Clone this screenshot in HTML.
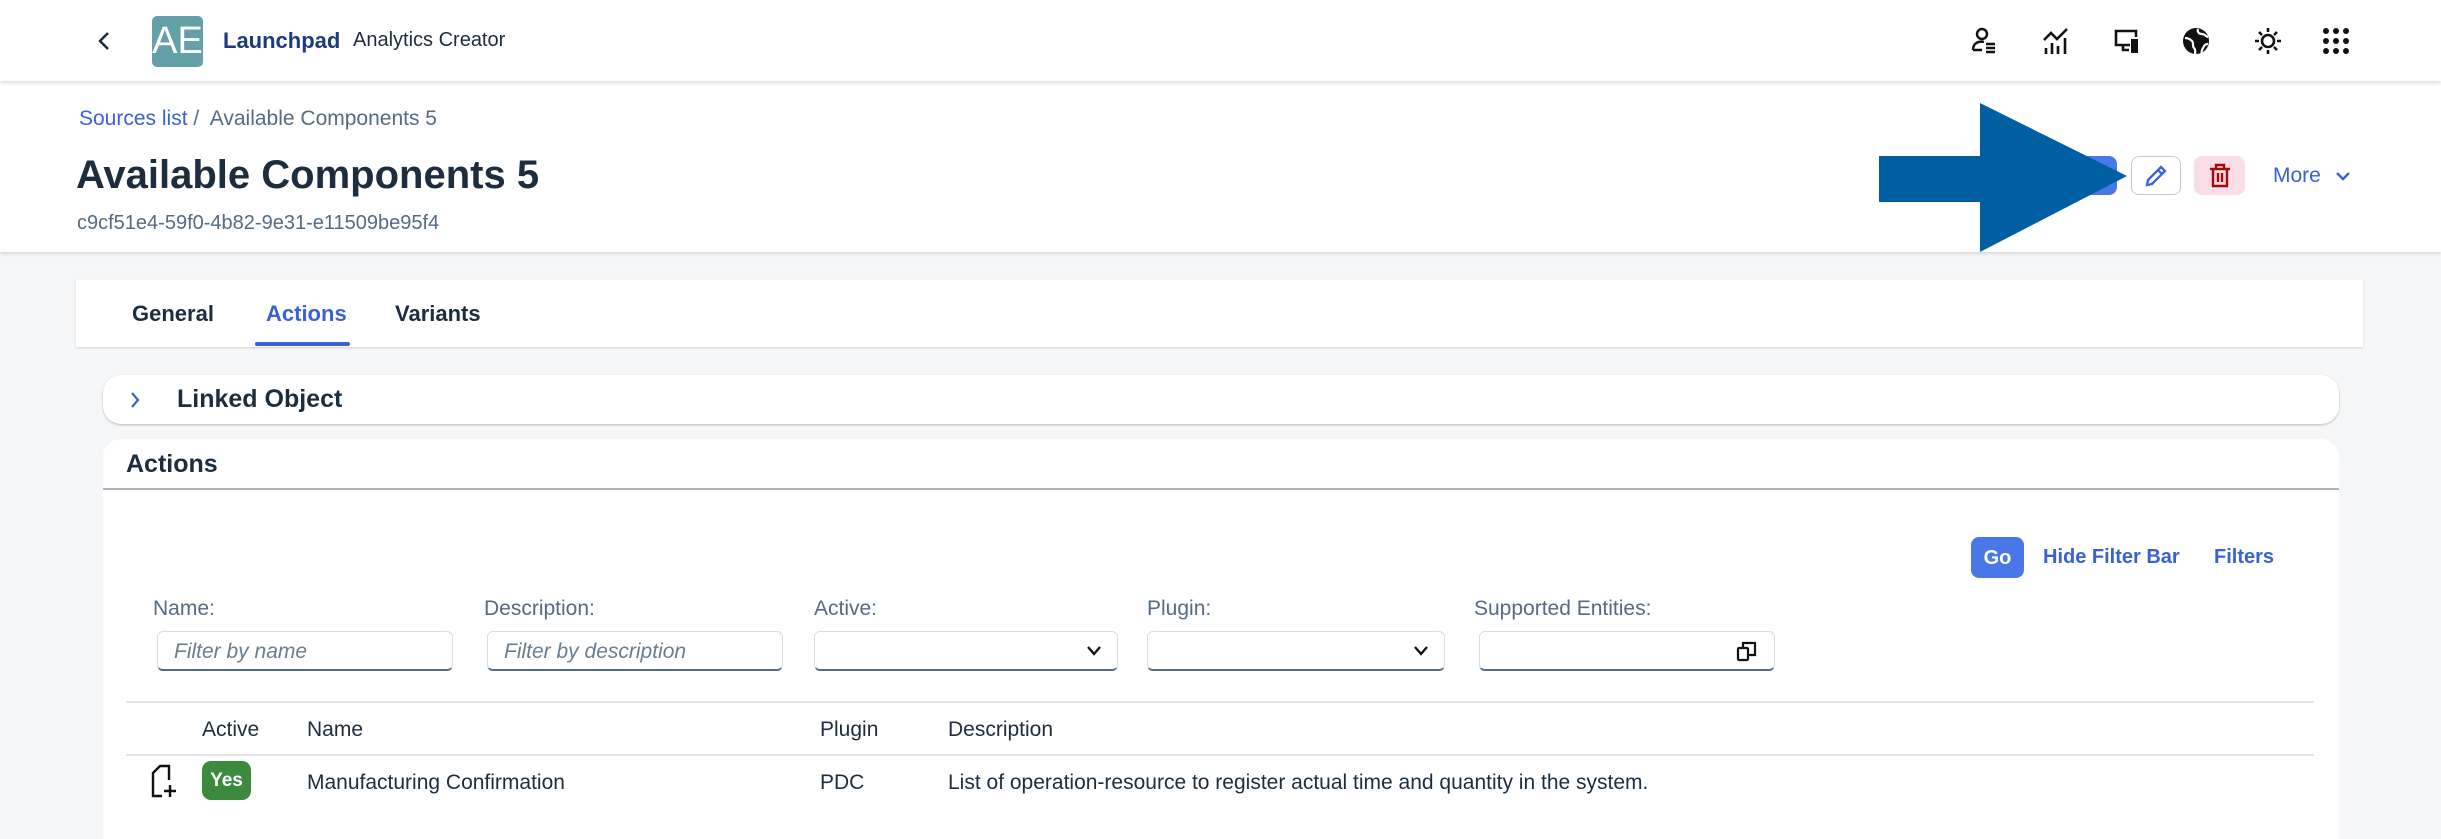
<!DOCTYPE html>
<html><head><meta charset="utf-8"><style>
*{margin:0;padding:0;box-sizing:border-box}
body{width:2441px;height:804px;overflow:hidden;background:#f5f6f7;font-family:"Liberation Sans",sans-serif;position:relative;color:#1d2d3e}
.a{position:absolute;white-space:nowrap}
.hdr{position:absolute;left:0;top:0;width:2441px;height:81px;background:#fff;box-shadow:0 2px 4px rgba(0,0,0,.15);z-index:2}
.obj{position:absolute;left:0;top:81px;width:2441px;height:171px;background:#fff;box-shadow:0 2px 3px rgba(0,0,0,.12);z-index:1}
.lbl{font-size:21px;color:#556b82;top:597px}
.inp{position:absolute;top:631px;height:40px;background:#fff;border:1px solid #d9dde2;border-bottom:2px solid #556b82;border-radius:6px}
.ph{font-style:italic;color:#6a7d90;font-size:21px;position:absolute;left:16px;top:8px}
.th{font-size:21px;top:718px;color:#1d2d3e}
.td{font-size:21px;top:771px;color:#1d2d3e}
</style></head><body>
<div class="hdr">
 <svg class="a" style="left:96px;top:30px" width="16" height="22" viewBox="0 0 16 22"><path d="M12 3 L4 11 L12 19" stroke="#1d2d3e" stroke-width="2.5" fill="none"/></svg>
 <div class="a" style="left:152px;top:16px;width:51px;height:51px;background:#64a0a8;border-radius:5px;color:#fff;font-size:38px;line-height:51px;text-align:center">AE</div>
 <div class="a" style="left:223px;top:28px;font-size:22px;font-weight:bold;color:#1d3b7a">Launchpad</div>
 <div class="a" style="left:353px;top:29px;font-size:20px;color:#1d2d3e">Analytics Creator</div>
 <svg class="a" style="left:1970px;top:26px" width="30" height="30" viewBox="0 0 30 30" fill="none" stroke="#111" stroke-width="2.4"><circle cx="12" cy="8" r="5"/><path d="M3 24 C3 16 10 15 14 16 M3 24 H12"/><path d="M16 18h9M16 22h9M16 26h9"/></svg>
 <svg class="a" style="left:2041px;top:26px" width="30" height="30" viewBox="0 0 30 30" fill="none" stroke="#111" stroke-width="2.6"><path d="M3 14 L10 7 L16 13 L26 3"/><path d="M5 22v6M11 17v11M17 20v8M24 12v16"/></svg>
 <svg class="a" style="left:2112px;top:26px" width="30" height="30" viewBox="0 0 30 30" fill="none" stroke="#111" stroke-width="2.6"><path d="M18 19H4V5h20v6"/><path d="M11 19v5h6"/><rect x="19" y="13" width="7" height="14" fill="#111" stroke="none"/></svg>
 <svg class="a" style="left:2181px;top:26px" width="30" height="30" viewBox="0 0 30 30"><circle cx="15" cy="15" r="13" fill="#111"/><path d="M4 12c3 0 5 1 7 3s0 5 2 7 1 5 1 6M17 3c-1 3 1 5 4 5s4 3 6 3M27 18c-3 0-4 2-5 4s-2 4-1 5" stroke="#fff" stroke-width="2.2" fill="none"/></svg>
 <svg class="a" style="left:2253px;top:26px" width="30" height="30" viewBox="0 0 30 30" fill="none" stroke="#111" stroke-width="2.6"><circle cx="15" cy="15" r="6"/><path d="M15 2v4M15 24v4M2 15h4M24 15h4M6 6l3 3M21 21l3 3M6 24l3-3M21 9l3-3"/></svg>
 <svg class="a" style="left:2322px;top:27px" width="28" height="28" viewBox="0 0 28 28" fill="#111"><circle cx="4" cy="4" r="3"/><circle cx="14" cy="4" r="3"/><circle cx="24" cy="4" r="3"/><circle cx="4" cy="14" r="3"/><circle cx="14" cy="14" r="3"/><circle cx="24" cy="14" r="3"/><circle cx="4" cy="24" r="3"/><circle cx="14" cy="24" r="3"/><circle cx="24" cy="24" r="3"/></svg>
</div>
<div class="obj">
 <div class="a" style="left:79px;top:26px;font-size:21px;color:#556b82"><span style="color:#3a62d6">Sources list</span> /&nbsp; Available Components 5</div>
 <div class="a" style="left:76px;top:72px;font-size:40px;font-weight:bold;color:#1d2d3e">Available Components 5</div>
 <div class="a" style="left:77px;top:131px;font-size:20px;color:#556b82">c9cf51e4-59f0-4b82-9e31-e11509be95f4</div>
 <div class="a" style="left:2050px;top:75px;width:67px;height:39px;background:#4a77e8;border-radius:8px"></div>
 <div class="a" style="left:2131px;top:75px;width:50px;height:39px;background:#fff;border:1.5px solid #c5c9ce;border-radius:8px"></div>
 <svg class="a" style="left:2143px;top:83px" width="26" height="24" viewBox="0 0 26 24" fill="none" stroke="#3a62d6" stroke-width="2.3"><path d="M4 21 L5 16 L18 3 L22 7 L9 20 Z M15 6 L19 10"/></svg>
 <div class="a" style="left:2194px;top:75px;width:51px;height:39px;background:#fbdde8;border-radius:8px"></div>
 <svg class="a" style="left:2208px;top:81px" width="24" height="27" viewBox="0 0 24 27" fill="none" stroke="#aa0808" stroke-width="2.4"><path d="M2 7h20M8 7V3h8v4M5 7v17h14V7M10 11v9M14 11v9"/></svg>
 <div class="a" style="left:2273px;top:83px;font-size:21px;color:#3a62d6">More</div>
 <svg class="a" style="left:2335px;top:89px" width="16" height="12" viewBox="0 0 16 12"><path d="M2 3 L8 9 L14 3" stroke="#3a62d6" stroke-width="2.4" fill="none"/></svg>
</div>
<svg class="a" style="left:0;top:0;z-index:3" width="2441" height="260"><path d="M1879 156 H1980 V103 L2127 176 L1980 252 V202 H1879 Z" fill="#005fa3"/></svg>

<div class="a" style="left:76px;top:280px;width:2287px;height:67px;background:#fff;box-shadow:0 1px 2px rgba(0,0,0,.15)"></div>
<div class="a" style="left:132px;top:301px;font-size:22px;font-weight:bold">General</div>
<div class="a" style="left:266px;top:301px;font-size:22px;font-weight:bold;color:#3a62d6">Actions</div>
<div class="a" style="left:255px;top:342px;width:95px;height:4px;background:#3a62d6;border-radius:2px"></div>
<div class="a" style="left:395px;top:301px;font-size:22px;font-weight:bold">Variants</div>

<div class="a" style="left:103px;top:375px;width:2236px;height:49px;background:#fff;border-radius:18px;box-shadow:0 1px 2px rgba(0,0,0,.25)"></div>
<svg class="a" style="left:128px;top:390px" width="14" height="20" viewBox="0 0 14 20"><path d="M4 3 L10 10 L4 17" stroke="#3a62d6" stroke-width="2.3" fill="none"/></svg>
<div class="a" style="left:177px;top:385px;font-size:25px;font-weight:bold">Linked Object</div>

<div class="a" style="left:103px;top:439px;width:2236px;height:400px;background:#fff;border-radius:18px 18px 0 0"></div>
<div class="a" style="left:126px;top:450px;font-size:25px;font-weight:bold">Actions</div>
<div class="a" style="left:103px;top:488px;width:2236px;height:2px;background:#a9b4be"></div>

<div class="a" style="left:1971px;top:537px;width:53px;height:41px;background:#4a77e8;border-radius:8px;color:#fff;font-weight:bold;font-size:20px;text-align:center;line-height:42px">Go</div>
<div class="a" style="left:2043px;top:546px;font-size:20px;font-weight:bold;color:#3a62d6">Hide Filter Bar</div>
<div class="a" style="left:2214px;top:546px;font-size:20px;font-weight:bold;color:#3a62d6">Filters</div>

<div class="a lbl" style="left:153px">Name:</div>
<div class="a lbl" style="left:484px">Description:</div>
<div class="a lbl" style="left:814px">Active:</div>
<div class="a lbl" style="left:1147px">Plugin:</div>
<div class="a lbl" style="left:1474px">Supported Entities:</div>
<div class="inp" style="left:157px;width:296px"><span class="ph">Filter by name</span></div>
<div class="inp" style="left:487px;width:296px"><span class="ph">Filter by description</span></div>
<div class="inp" style="left:814px;width:304px"><svg class="a" style="right:14px;top:12px" width="18" height="14" viewBox="0 0 18 14"><path d="M3 3 L9 10 L15 3" stroke="#111" stroke-width="2.3" fill="none"/></svg></div>
<div class="inp" style="left:1147px;width:298px"><svg class="a" style="right:14px;top:12px" width="18" height="14" viewBox="0 0 18 14"><path d="M3 3 L9 10 L15 3" stroke="#111" stroke-width="2.3" fill="none"/></svg></div>
<div class="inp" style="left:1479px;width:296px"><svg class="a" style="right:16px;top:8px" width="22" height="22" viewBox="0 0 22 22" fill="none" stroke="#111" stroke-width="2.2"><rect x="2" y="8" width="10" height="12" rx="1"/><path d="M7 8V3h12v12h-7"/></svg></div>

<div class="a" style="left:126px;top:701px;width:2188px;height:2px;background:#e1e4e8"></div>
<div class="a th" style="left:202px">Active</div>
<div class="a th" style="left:307px">Name</div>
<div class="a th" style="left:820px">Plugin</div>
<div class="a th" style="left:948px">Description</div>
<div class="a" style="left:126px;top:754px;width:2188px;height:2px;background:#e1e4e8"></div>
<svg class="a" style="left:150px;top:764px" width="28" height="34" viewBox="0 0 28 34" fill="none" stroke="#111" stroke-width="2.4"><path d="M12 32H3V9l7-7h9v14"/><path d="M20 21v12M14 27h12"/></svg>
<div class="a" style="left:202px;top:761px;width:49px;height:39px;background:#3b8a3e;border-radius:9px;color:#fff;font-weight:bold;font-size:19px;text-align:center;line-height:39px">Yes</div>
<div class="a td" style="left:307px">Manufacturing Confirmation</div>
<div class="a td" style="left:820px">PDC</div>
<div class="a td" style="left:948px">List of operation-resource to register actual time and quantity in the system.</div>
</body></html>
